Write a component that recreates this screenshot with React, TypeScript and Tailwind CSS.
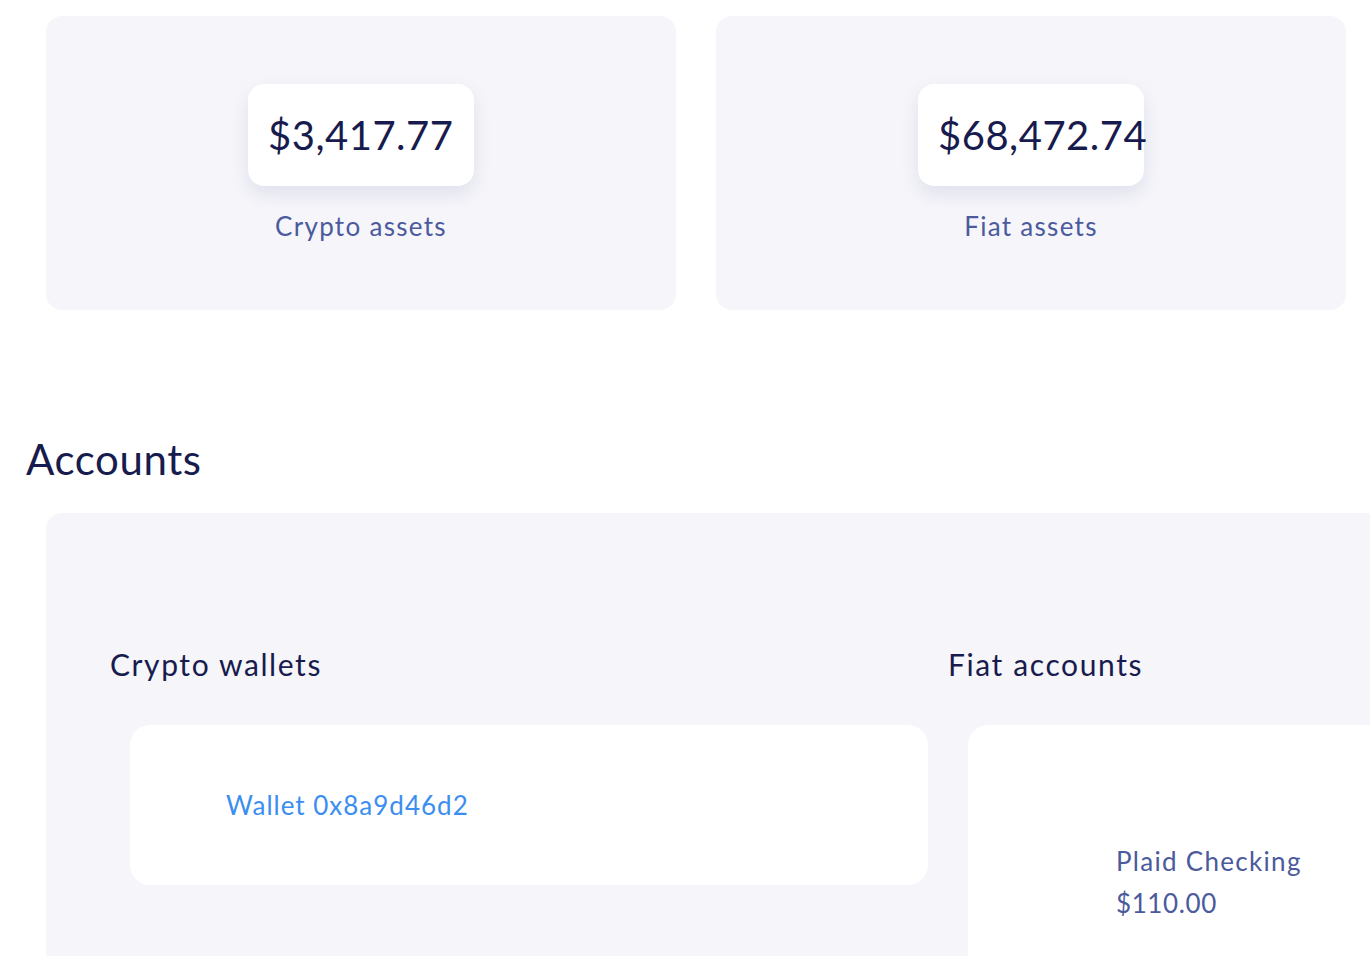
import React from 'react';

const font = { fontFamily: '"Lato", "Noto Sans", sans-serif' };

function AssetCard({ value, label }: { value: string; label: string }) {
  return (
    <div className="flex flex-1 flex-col items-center rounded-2xl bg-[#f5f5fa] pt-[68px] pb-[68px]">
      <div className="flex h-[102px] w-[226px] items-center rounded-2xl bg-white pl-5 shadow-[0_8px_18px_rgba(40,50,110,0.10)]">
        <span className="whitespace-nowrap text-[40px] leading-none tracking-[0.5px] text-[#171b4d]">{value}</span>
      </div>
      <div className="mt-[25px] text-[26px] leading-[31px] tracking-[1.3px] text-[#4b5a9c]">{label}</div>
    </div>
  );
}

export default function App() {
  return (
    <div className="h-[956px] w-[1370px] overflow-hidden bg-white" style={font}>
      {/* --- totals --- */}
      <div className="flex gap-10 pt-4 pl-[46px] pr-6">
        <AssetCard value="$3,417.77" label="Crypto assets" />
        <AssetCard value="$68,472.74" label="Fiat assets" />
      </div>

      {/* --- accounts --- */}
      <h2 className="mt-[124px] pl-[26px] text-[42px] leading-[50px] tracking-[0.6px] text-[#171b4d]">Accounts</h2>

      <div className="ml-[46px] mt-[29px] flex w-[1804px] rounded-2xl bg-[#f5f5fa] pt-[133px] pl-16 pb-20">
        <div className="w-[838px]">
          <h3 className="text-[30px] leading-9 tracking-[1.6px] text-[#171b4d]">Crypto wallets</h3>
          <div className="mx-5 mt-[43px] flex h-[160px] items-center rounded-[20px] bg-white pl-24">
            <span className="text-[26px] tracking-[1px] text-[#3b8ef0]">Wallet 0x8a9d46d2</span>
          </div>
        </div>
        <div className="w-[838px]">
          <h3 className="text-[30px] leading-9 tracking-[1.6px] text-[#171b4d]">Fiat accounts</h3>
          <div className="mx-5 mt-[43px] h-[300px] rounded-[20px] bg-white pt-[115px] pl-[148px]">
            <div className="text-[26px] leading-[42px] tracking-[1.3px] text-[#4b5a9c]">Plaid Checking</div>
            <div className="text-[26px] leading-[42px] tracking-[0.6px] text-[#4b5a9c]">$110.00</div>
          </div>
        </div>
      </div>
    </div>
  );
}
